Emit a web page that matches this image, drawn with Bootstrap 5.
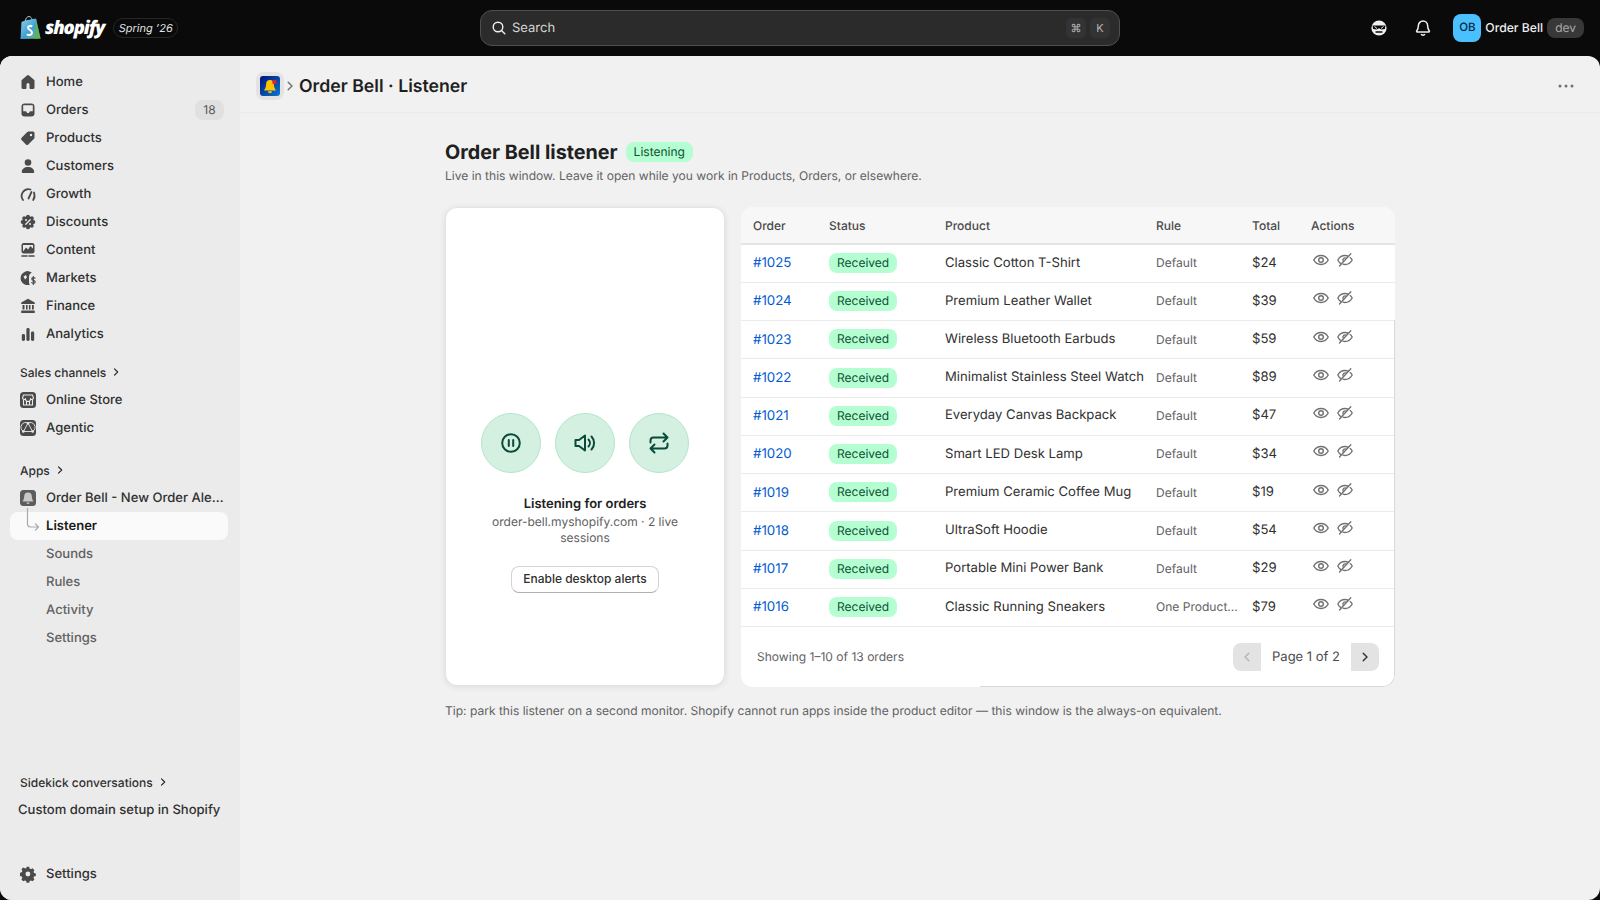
<!doctype html>
<html lang="en"><head><meta charset="utf-8"><title>Order Bell</title>
<link href="https://cdn.jsdelivr.net/npm/bootstrap@5.3.0/dist/css/bootstrap.min.css" rel="stylesheet">
<style>
html,body{height:100%}
body{background:#0a0a0a;font-family:Inter,"Liberation Sans",sans-serif;font-size:13.05px;color:#303030;overflow:hidden;text-rendering:geometricPrecision}
.topbar{height:56px;padding:0 16px 0 20px;flex:none;color:#e3e3e3}
.wordmark{font-family:"Open Sans",sans-serif;font-style:italic;font-weight:800;font-size:18.5px;letter-spacing:-1.1px;color:#fff;line-height:1}
.spring{font-size:11px;font-style:italic;color:#e3e3e3;border:1px solid #262626;border-radius:10px;height:20px;line-height:18px;padding:0;margin-left:9px;width:65px;text-align:center;white-space:nowrap}
.searchbox{position:absolute;left:480px;width:640px;top:10px;height:36px;background:#2b2b2b;border:1px solid #4f4f4f;border-radius:12px;color:#d6d6d6;padding:0 10px;font-size:13px}
.searchglass{margin-right:5px;color:#f0f0f0}
.searchword{margin-top:2px}
.keys{margin-right:-1px}
.keycap{width:20px;height:20px;border-radius:5px;background:#333;color:#b5b5b5;font-size:11px;display:flex;align-items:center;justify-content:center}
.avatar{width:28px;height:28px;border-radius:8px;background:#4ac0ff;color:#06283d;font-size:11.5px;font-weight:500;display:flex;align-items:center;justify-content:center;margin-left:20px}
.devtag{background:#383838;color:#a8a8a8;border-radius:8px;height:20px;line-height:20px;padding:0 8px;font-size:12px}
.ownername{color:#f0f0f0;font-weight:450;font-size:12.2px}
.bellgap{margin-left:24px}
.shell{flex:1 1 auto;min-height:0;border-radius:12px;overflow:hidden;background:#f1f1f1}
.side{width:240px;flex:none;background:#ebebeb;padding:12px 12px 12px 10px;font-weight:500}
.side-item{height:28px;padding:2px 4px 0 8px;gap:8px;border-radius:8px;color:#303030;text-decoration:none;display:flex;align-items:center;position:relative}
.side-item svg{width:20px;height:20px;flex:none;color:#4a4a4a;margin-top:-2px}
.side-head{height:28px;padding:2px 0 0 10px;font-size:12px;display:flex;align-items:center;gap:5px;color:#303030}
.side-head svg{width:10px;height:10px;margin-top:-2px}
.gap10{margin-top:10px}.gap14{margin-top:14px}.gap36{margin-top:36px}
.sub-item{padding-left:36px;color:#616161;font-weight:450}
.sub-on{background:#fafafa;color:#1a1a1a;font-weight:600}
.count{background:#e0e0e0;color:#555;border-radius:8px;height:20px;width:29px;font-size:12px;font-weight:400;display:flex;align-items:center;justify-content:center;margin-left:auto;margin-top:-2px}
.side-item .elbow{position:absolute;left:16px;top:-4px;width:14px;height:24px;color:#ababab;margin:0}
.sidekick{margin-top:auto}
.pagehead{height:57px;flex:none;border-bottom:1px solid #ebebeb;padding:3px 26px 0 16px}
.appicon{width:28px;height:28px;background:#e3e3e3;border-radius:8px;display:flex;align-items:center;justify-content:center}
.crumbchev{color:#707070;margin:0 3px 0 0}
.pagetitle{font-size:17.7px;font-weight:600;color:#1f1f1f;margin:3px 0 0;line-height:24px}
.content{width:950px;margin:0 auto;padding-top:27px}
.heading{font-size:19.75px;font-weight:700;line-height:24px;margin:0;color:#202020}
.pill{background:#b4fed2;color:#0c5132;border-radius:8px;height:20px;line-height:20px;padding:0 8px;font-size:12px;display:inline-block}
.lede{font-size:12.05px;color:#616161;line-height:16px;margin:4px 0 23px}
.listener{width:280px;flex:none;margin-bottom:1px;padding-top:112px;border:1px solid #e3e3e3;border-radius:12px;box-shadow:0 1px 6px rgba(0,0,0,.09);background:#fff}
.roundbtn{width:60px;height:60px;border-radius:50%;background:#d3f0e0;border:1px solid #b4e5cb;color:#0b4a3b;display:flex;align-items:center;justify-content:center;padding:0}
.roundbtn svg{width:24px;height:24px}
.listen-title{font-weight:600;font-size:13px;line-height:16px;color:#222;margin:23px 0 2px}
.listen-sub{font-size:12px;line-height:16px;color:#616161;margin:0 0 20px;width:220px}
.alertbtn{height:27px;padding:0 11.5px;font-size:12px;font-weight:500;color:#303030;background:#fff;border:1px solid #d4d4d4;border-bottom-color:#b0b0b0;border-radius:8px;line-height:1}
.orders{width:654px;flex:none;border:0;border-radius:12px;overflow:hidden;background:#fff;height:480px;position:relative}
.orders::after{content:"";position:absolute;left:239px;right:0;top:113px;bottom:0;border-right:1px solid #d8d8d8;border-bottom:1px solid #d8d8d8;border-bottom-right-radius:12px;pointer-events:none}
.orders table{table-layout:fixed;margin:0;--bs-table-bg:transparent;--bs-table-color:#303030;--bs-table-border-color:#ebebeb}
.orders th{background:#f7f7f7;height:37px;padding:1px 12px 0;font-size:12px;font-weight:500;color:#4a4a4a;vertical-align:middle;border-bottom:2px solid #e3e3e3}
.orders td{height:38.25px;padding:0 12px;vertical-align:middle;font-size:13.1px;border-bottom:1px solid #ebebeb}
.c1{width:76px}.c2{width:116px}.c3{width:211px}.c4{width:96px}.c5{width:59px}
.orderlink{color:#005bd3;text-decoration:none;font-size:13.3px;display:inline-block;margin-top:2px}
.orders td.ruletext{font-size:12.05px;color:#616161;padding-right:0;white-space:nowrap}
.acts{gap:4px;margin-top:-6px;color:#707070}
.acts svg{width:20px;height:20px}
.pager-btn{width:28px;height:28px;border:0;padding:0;background:#e3e3e3;display:flex;align-items:center;justify-content:center;color:#303030}
.pager-btn svg{width:12px;height:12px}
.pager-prev{border-radius:8px 0 0 8px;color:#b5b5b5}
.pager-next{border-radius:0 8px 8px 0}
.tablefoot{flex:1 1 auto;padding:0 16px;font-size:12.05px;color:#616161}
.pagelabel{font-size:13px;color:#4a4a4a;padding:2px 11px 0}
.tipline{font-size:12.05px;line-height:16px;color:#616161;margin:16px 0 0}
</style></head>
<body class="d-flex flex-column">
<svg width="0" height="0" class="position-absolute">
<defs>
<linearGradient id="bagfill" x1="0" y1="0" x2="1" y2="1"><stop offset="0" stop-color="#8ed3e8"/><stop offset=".55" stop-color="#3f9ed6"/><stop offset="1" stop-color="#7cc36a"/></linearGradient>
<linearGradient id="appfill" x1="0" y1="0" x2="1" y2="1"><stop offset="0" stop-color="#04127a"/><stop offset="1" stop-color="#0a78cf"/></linearGradient>
<symbol id="chev" viewBox="0 0 12 12"><path d="M4.200 2.200 8 6l-3.800 3.800" fill="none" stroke="currentColor" stroke-width="1.400" stroke-linecap="round" stroke-linejoin="round"/></symbol>
<symbol id="chevl" viewBox="0 0 12 12"><path d="M7.800 2.200 4 6l3.800 3.800" fill="none" stroke="currentColor" stroke-width="1.400" stroke-linecap="round" stroke-linejoin="round"/></symbol>
<symbol id="eye" viewBox="0 0 20 20"><g fill="none" stroke="currentColor" stroke-width="1.400"><path d="M2.800 10c1.600-3 4.100-4.500 7.200-4.500s5.600 1.500 7.200 4.500c-1.600 3-4.100 4.500-7.200 4.500S4.400 13 2.800 10z"/><circle cx="10" cy="10" r="2.300"/></g></symbol>
<symbol id="eyeoff" viewBox="0 0 20 20"><g fill="none" stroke="currentColor" stroke-width="1.300" stroke-linecap="round"><path d="M6 13.600C4.700 12.900 3.600 11.700 2.800 10c1.600-3 4.100-4.500 7.200-4.500 1.300 0 2.500.3 3.500.8M15.200 7.600c.8.700 1.500 1.500 2 2.400-1.600 3-4.100 4.500-7.200 4.500-.7 0-1.400-.1-2-.3"/><path d="M8.200 11.300A2.300 2.300 0 0 1 11.400 8.200"/><path d="M15.800 3.800 4.500 16"/></g></symbol>
</defs></svg>

<header class="topbar d-flex align-items-center position-relative">
  <svg width="21" height="24" viewBox="0 0 21 24" class="me-1"><path d="M5 4.500 16 2.500 20.500 22.500 0.500 23 1.500 6z" fill="url(#bagfill)"/><path d="M16 2.500 20.500 22.500 14 23z" fill="#5fb24f" opacity=".75"/><path d="M5.500 5c0-3 2-4.500 3.500-4.500S12 2 12 4" fill="none" stroke="#9ec9d8" stroke-width="1"/><path d="M12.300 10.300c-1.800-.8-4.300-.5-4.300 1.500 0 2 4 2.300 4 4.700 0 2.500-3 3-5.300 1.800" fill="none" stroke="#fff" stroke-width="2"/></svg>
  <span class="wordmark">shopify</span>
  <span class="spring">Spring ’26</span>
  <div class="searchbox d-flex align-items-center">
    <svg width="16" height="16" viewBox="0 0 16 16" class="searchglass"><circle cx="7" cy="7" r="4.800" fill="none" stroke="currentColor" stroke-width="1.400"/><path d="m10.500 10.500 3.300 3.300" stroke="currentColor" stroke-width="1.400" stroke-linecap="round"/></svg>
    <span class="searchword">Search</span>
    <span class="ms-auto d-flex gap-1 keys"><span class="keycap">⌘</span><span class="keycap">K</span></span>
  </div>
  <div class="ms-auto d-flex align-items-center">
    <svg width="20" height="20" viewBox="0 0 20 20"><circle cx="10" cy="10" r="7.600" fill="#f0f0f0"/><path d="M3.500 7.500h13l-.6 3.400-3.400.6L10 10.300l-2.500 1.200-3.400-.6z" fill="#0a0a0a"/><path d="M5.500 8.500 8 10.500M14.500 8.500 12 10.500" stroke="#f0f0f0" stroke-width="1"/><path d="M7 14h6" stroke="#0a0a0a" stroke-width="1.300" stroke-linecap="round"/></svg>
    <svg width="20" height="20" viewBox="0 0 20 20" class="bellgap"><path d="M10 3a4.600 4.600 0 0 0-4.600 4.600c0 2.900-.6 4-1.700 5.400-.3.400 0 .9.500.9h11.600c.5 0 .8-.5.500-.9-1.100-1.400-1.700-2.500-1.700-5.400A4.600 4.600 0 0 0 10 3z" fill="none" stroke="#f0f0f0" stroke-width="1.500"/><path d="M8.200 16a1.900 1.900 0 0 0 3.600 0" fill="none" stroke="#f0f0f0" stroke-width="1.500"/></svg>
    <div class="avatar">OB</div>
    <span class="mx-1 ownername">Order Bell</span>
    <span class="devtag">dev</span>
  </div>
</header>

<div class="shell d-flex">
<nav class="side d-flex flex-column">
  <a class="side-item"><svg viewBox="0 0 20 20" fill="currentColor"><path d="M9 3.400a1.500 1.500 0 0 1 2 0l5 4.300c.3.300.5.700.5 1.100v6.700a1.500 1.500 0 0 1-1.500 1.500h-2.500a1 1 0 0 1-1-1v-3.500a1.500 1.500 0 0 0-3 0v3.500a1 1 0 0 1-1 1H5a1.500 1.500 0 0 1-1.500-1.500V8.800c0-.4.200-.8.500-1.100z"/></svg>Home</a>
  <a class="side-item"><svg viewBox="0 0 20 20"><rect x="3.500" y="3.500" width="13" height="13" rx="3.200" fill="currentColor"/><path d="M5.200 5.200h9.600v6.100h-2.300c-.6 0-1 .4-1.200.9a1.400 1.400 0 0 1-2.600 0c-.2-.5-.6-.9-1.200-.9H5.200z" fill="#ebebeb"/></svg>Orders<span class="count">18</span></a>
  <a class="side-item"><svg viewBox="0 0 20 20" fill="currentColor"><path fill-rule="evenodd" d="M10.500 3.500H15A1.500 1.500 0 0 1 16.500 5v4.500c0 .5-.2.900-.5 1.200l-5.700 5.700a1.700 1.700 0 0 1-2.400 0l-4.300-4.300a1.700 1.700 0 0 1 0-2.400l5.700-5.700c.3-.3.700-.5 1.200-.5zM13 5.800a1.200 1.200 0 1 0 0 2.400 1.200 1.200 0 0 0 0-2.400z"/></svg>Products</a>
  <a class="side-item"><svg viewBox="0 0 20 20" fill="currentColor"><circle cx="10" cy="6.500" r="3.300"/><path d="M3.800 16c0-3 2.600-5 6.200-5s6.200 2 6.200 5c0 .6-.5 1-1 1H4.800c-.5 0-1-.4-1-1z"/></svg>Customers</a>
  <a class="side-item"><svg viewBox="0 0 20 20" fill="none" stroke="currentColor" stroke-width="1.800" stroke-linecap="round"><path d="M5 16a6.800 6.800 0 0 1 7.500-10.500"/><path d="M16 8.500c1 2.700.600 5.300-.8 7.500"/><path d="M10.500 14.500 13.500 8"/></svg>Growth</a>
  <a class="side-item"><svg viewBox="0 0 20 20"><g fill="currentColor"><circle cx="10" cy="10" r="5.800"/><circle cx="10" cy="4.600" r="1.900"/><circle cx="10" cy="15.400" r="1.900"/><circle cx="4.600" cy="10" r="1.900"/><circle cx="15.400" cy="10" r="1.900"/><circle cx="6.200" cy="6.200" r="1.900"/><circle cx="13.800" cy="6.200" r="1.900"/><circle cx="6.200" cy="13.800" r="1.900"/><circle cx="13.800" cy="13.800" r="1.900"/></g><path d="m7.800 12.200 4.400-4.400" stroke="#ebebeb" stroke-width="1.300" stroke-linecap="round"/><circle cx="8" cy="8" r="1" fill="#ebebeb"/><circle cx="12" cy="12" r="1" fill="#ebebeb"/></svg>Discounts</a>
  <a class="side-item"><svg viewBox="0 0 20 20"><rect x="3.500" y="3" width="13" height="10.500" rx="2.200" fill="currentColor"/><path d="M5 11.500 8 7.500l2.200 2 2-3.500 2.800 2.500V5H5z" fill="#ebebeb"/><path d="M4 16h5M11 16h5" stroke="currentColor" stroke-width="1.600" stroke-linecap="round"/></svg>Content</a>
  <a class="side-item"><svg viewBox="0 0 20 20"><path d="M13.800 4.500A7 7 0 1 0 12 16.700c-.8-.7-1-1.600-1-2.700V9c0-2 1.200-3.600 2.800-4.500z" fill="currentColor"/><path d="M5.500 8.500 8 7l1 2.500-2 2z" fill="#ebebeb"/><path d="M17 10.200c-.8-.8-3.200-.8-3.200.7 0 1.800 3.400 1.200 3.400 3 0 1.500-2.500 1.500-3.500.7M15.300 8.500v8" fill="none" stroke="currentColor" stroke-width="1.200" stroke-linecap="round"/></svg>Markets</a>
  <a class="side-item"><svg viewBox="0 0 20 20" fill="currentColor"><path d="M10 2.800 16.800 6.500v1.500H3.200V6.500z"/><path d="M4.500 9h2v4.500h-2zM8 9h1.600v4.500H8zM10.900 9h1.600v4.500h-1.600zM14 9h1.800v4.500H14z"/><rect x="3.200" y="14.500" width="13.600" height="2.500" rx=".6"/></svg>Finance</a>
  <a class="side-item"><svg viewBox="0 0 20 20" fill="currentColor"><rect x="3.800" y="10" width="3.200" height="7" rx="1.400"/><rect x="8.400" y="4" width="3.200" height="13" rx="1.400"/><rect x="13" y="7.500" width="3.200" height="9.500" rx="1.400"/></svg>Analytics</a>

  <div class="side-head gap10">Sales channels <svg class="text-body"><use href="#chev"/></svg></div>
  <a class="side-item"><svg viewBox="0 0 20 20"><rect x="2" y="2" width="16" height="16" rx="3.500" fill="currentColor"/><path d="M5.500 5h9l1 3a1.800 1.800 0 0 1-3 1 2.300 2.300 0 0 1-5 0 1.800 1.800 0 0 1-3-1z" fill="none" stroke="#ebebeb" stroke-width="1.100"/><path d="M5.500 10v5h9v-5M8.500 15v-3.500h3V15" fill="none" stroke="#ebebeb" stroke-width="1.100"/></svg>Online Store</a>
  <a class="side-item"><svg viewBox="0 0 20 20"><rect x="2" y="2" width="16" height="16" rx="3.500" fill="currentColor"/><path d="M10 5 14.500 13.500h-9zM10 5a4.500 4.500 0 0 1 4.500 8.500M10 5a4.500 4.500 0 0 0-4.500 8.500" fill="none" stroke="#ebebeb" stroke-width=".9"/><g fill="#ebebeb"><circle cx="10" cy="5.200" r="1.300"/><circle cx="5.300" cy="13.500" r="1.300"/><circle cx="14.700" cy="13.500" r="1.300"/></g></svg>Agentic</a>

  <div class="side-head gap14">Apps <svg class="text-body"><use href="#chev"/></svg></div>
  <a class="side-item"><svg viewBox="0 0 20 20"><rect x="2" y="2" width="16" height="16" rx="3.500" fill="#5c5c5c"/><path d="M10 4.500a3.800 3.800 0 0 0-3.800 3.800c0 3-1.200 4.200-1.700 5.200h11c-.5-1-1.700-2.200-1.700-5.200A3.800 3.800 0 0 0 10 4.500z" fill="#c8c8c8"/><path d="M8.500 14.500a1.500 1.500 0 0 0 3 0z" fill="#c8c8c8"/></svg><span class="text-nowrap">Order Bell - New Order Ale…</span></a>
  <a class="side-item sub-item sub-on"><svg class="elbow" viewBox="0 0 14 24"><path d="M1.500 0v16a3 3 0 0 0 3 3h8M9.500 16l3 3-3 3" fill="none" stroke="currentColor" stroke-width="1.200" stroke-linecap="round" stroke-linejoin="round"/></svg>Listener</a>
  <a class="side-item sub-item">Sounds</a>
  <a class="side-item sub-item">Rules</a>
  <a class="side-item sub-item">Activity</a>
  <a class="side-item sub-item">Settings</a>

  <div class="sidekick">
    <div class="side-head">Sidekick conversations <svg class="text-body"><use href="#chev"/></svg></div>
    <a class="side-item">Custom domain setup in Shopify</a>
    <a class="side-item gap36"><svg viewBox="0 0 20 20"><path fill="currentColor" fill-rule="evenodd" d="M8.600 3h2.800l.5 2 1.500.7 1.800-1 2 2-1 1.800.6 1.500 2 .5v2.800l-2 .5-.6 1.500 1 1.800-2 2-1.800-1-1.500.6-.5 2H8.600l-.5-2-1.500-.6-1.800 1-2-2 1-1.800-.6-1.500-2-.5V9.500l2-.5.6-1.500-1-1.800 2-2 1.800 1L8.100 5zM10 8.300a2.700 2.700 0 1 0 0 5.400 2.700 2.700 0 0 0 0-5.400z" transform="translate(1 1) scale(.9) translate(-.1 -1)"/></svg>Settings</a>
  </div>
</nav>

<main class="flex-grow-1 d-flex flex-column">
  <div class="pagehead d-flex align-items-center">
    <span class="appicon"><svg width="20" height="20" viewBox="0 0 20 20"><rect width="20" height="20" rx="3" fill="url(#appfill)"/><path d="M10 4a3.800 3.800 0 0 0-3.800 3.800c0 3.200-1.200 5-2.200 6.700h12c-1-1.700-2.200-3.500-2.200-6.700A3.800 3.800 0 0 0 10 4z" fill="#ffc400"/><path d="M8 15.200a2 2 0 0 0 4 0z" fill="#ffc400"/><circle cx="14.500" cy="6" r="2.300" fill="#d8262c"/></svg></span>
    <svg width="12" height="12" class="crumbchev"><use href="#chev"/></svg>
    <h1 class="pagetitle">Order Bell · Listener</h1>
    <svg width="16" height="4" viewBox="0 0 16 4" class="ms-auto" fill="#707070"><circle cx="2" cy="2" r="1.500"/><circle cx="8" cy="2" r="1.500"/><circle cx="14" cy="2" r="1.500"/></svg>
  </div>
  <div class="content">
    <div class="d-flex align-items-center gap-2"><h2 class="heading">Order Bell listener</h2><span class="pill">Listening</span></div>
    <p class="lede">Live in this window. Leave it open while you work in Products, Orders, or elsewhere.</p>
    <div class="d-flex" style="gap:16px">
      <div class="listener d-flex flex-column align-items-center justify-content-center text-center">
        <div class="d-flex" style="gap:14px">
          <button class="roundbtn"><svg viewBox="0 0 24 24" fill="none" stroke="currentColor" stroke-width="2" stroke-linecap="round"><circle cx="12" cy="12" r="8.800"/><path d="M9.800 9v6M14.200 9v6"/></svg></button>
          <button class="roundbtn"><svg viewBox="0 0 24 24" fill="none" stroke="currentColor" stroke-width="2" stroke-linecap="round" stroke-linejoin="round"><path d="M2.500 9v6H6l6 4.500V4.500L6 9z"/><path d="M15.500 8.500a5 5 0 0 1 0 7M18.500 5.500a9.500 9.500 0 0 1 0 13"/></svg></button>
          <button class="roundbtn"><svg viewBox="0 0 24 24" fill="none" stroke="currentColor" stroke-width="2" stroke-linecap="round" stroke-linejoin="round"><path d="M3.500 11.500V9.500a3 3 0 0 1 3-3h14M16.500 2.500l4 4-4 4"/><path d="M20.500 12.500v2a3 3 0 0 1-3 3h-14M7.500 21.500l-4-4 4-4"/></svg></button>
        </div>
        <p class="listen-title">Listening for orders</p>
        <p class="listen-sub">order-bell.myshopify.com · 2 live sessions</p>
        <button class="btn alertbtn">Enable desktop alerts</button>
      </div>
      <div class="card orders d-flex flex-column">
        <table class="table">
          <colgroup><col class="c1"><col class="c2"><col class="c3"><col class="c4"><col class="c5"><col></colgroup>
          <thead><tr><th>Order</th><th>Status</th><th>Product</th><th>Rule</th><th>Total</th><th>Actions</th></tr></thead>
          <tbody>
<tr><td><a class="orderlink">#1025</a></td><td><span class="pill">Received</span></td><td>Classic Cotton T-Shirt</td><td class="ruletext">Default</td><td>$24</td><td><div class="acts d-flex"><svg><use href="#eye"/></svg><svg><use href="#eyeoff"/></svg></div></td></tr>
<tr><td><a class="orderlink">#1024</a></td><td><span class="pill">Received</span></td><td>Premium Leather Wallet</td><td class="ruletext">Default</td><td>$39</td><td><div class="acts d-flex"><svg><use href="#eye"/></svg><svg><use href="#eyeoff"/></svg></div></td></tr>
<tr><td><a class="orderlink">#1023</a></td><td><span class="pill">Received</span></td><td>Wireless Bluetooth Earbuds</td><td class="ruletext">Default</td><td>$59</td><td><div class="acts d-flex"><svg><use href="#eye"/></svg><svg><use href="#eyeoff"/></svg></div></td></tr>
<tr><td><a class="orderlink">#1022</a></td><td><span class="pill">Received</span></td><td class="text-nowrap">Minimalist Stainless Steel Watch</td><td class="ruletext">Default</td><td>$89</td><td><div class="acts d-flex"><svg><use href="#eye"/></svg><svg><use href="#eyeoff"/></svg></div></td></tr>
<tr><td><a class="orderlink">#1021</a></td><td><span class="pill">Received</span></td><td>Everyday Canvas Backpack</td><td class="ruletext">Default</td><td>$47</td><td><div class="acts d-flex"><svg><use href="#eye"/></svg><svg><use href="#eyeoff"/></svg></div></td></tr>
<tr><td><a class="orderlink">#1020</a></td><td><span class="pill">Received</span></td><td>Smart LED Desk Lamp</td><td class="ruletext">Default</td><td>$34</td><td><div class="acts d-flex"><svg><use href="#eye"/></svg><svg><use href="#eyeoff"/></svg></div></td></tr>
<tr><td><a class="orderlink">#1019</a></td><td><span class="pill">Received</span></td><td>Premium Ceramic Coffee Mug</td><td class="ruletext">Default</td><td>$19</td><td><div class="acts d-flex"><svg><use href="#eye"/></svg><svg><use href="#eyeoff"/></svg></div></td></tr>
<tr><td><a class="orderlink">#1018</a></td><td><span class="pill">Received</span></td><td>UltraSoft Hoodie</td><td class="ruletext">Default</td><td>$54</td><td><div class="acts d-flex"><svg><use href="#eye"/></svg><svg><use href="#eyeoff"/></svg></div></td></tr>
<tr><td><a class="orderlink">#1017</a></td><td><span class="pill">Received</span></td><td>Portable Mini Power Bank</td><td class="ruletext">Default</td><td>$29</td><td><div class="acts d-flex"><svg><use href="#eye"/></svg><svg><use href="#eyeoff"/></svg></div></td></tr>
<tr><td><a class="orderlink">#1016</a></td><td><span class="pill">Received</span></td><td>Classic Running Sneakers</td><td class="ruletext">One Product...</td><td>$79</td><td><div class="acts d-flex"><svg><use href="#eye"/></svg><svg><use href="#eyeoff"/></svg></div></td></tr>
          </tbody>
        </table>
        <div class="tablefoot d-flex align-items-center justify-content-between">
          <span>Showing 1–10 of 13 orders</span>
          <div class="d-flex align-items-center"><button class="pager-btn pager-prev"><svg><use href="#chevl"/></svg></button><span class="pagelabel">Page 1 of 2</span><button class="pager-btn pager-next"><svg><use href="#chev"/></svg></button></div>
        </div>
      </div>
    </div>
    <p class="tipline">Tip: park this listener on a second monitor. Shopify cannot run apps inside the product editor — this window is the always-on equivalent.</p>
  </div>
</main>
</div>
<script src="https://cdn.jsdelivr.net/npm/bootstrap@5.3.0/dist/js/bootstrap.bundle.min.js"></script>
</body></html>
